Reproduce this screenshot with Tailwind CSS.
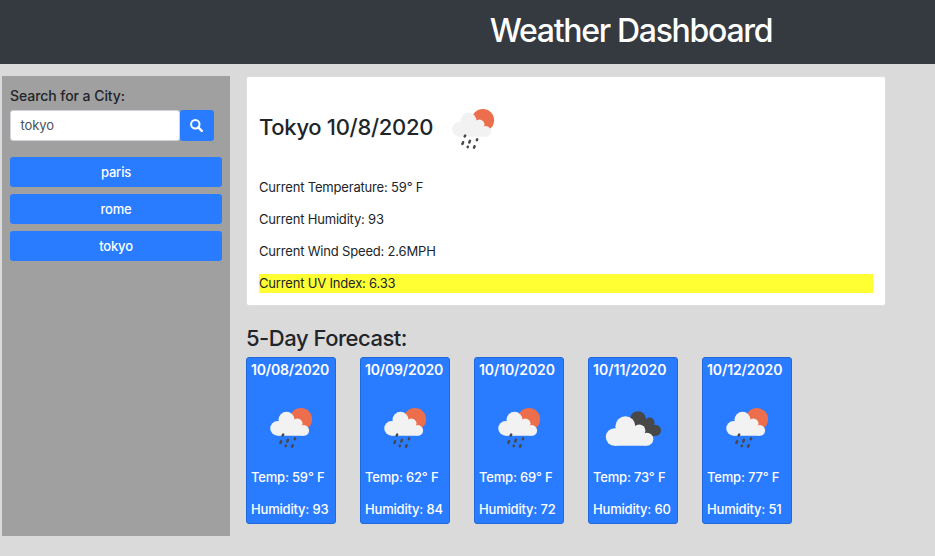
<!DOCTYPE html>
<html lang="en">
<head>
<meta charset="utf-8">
<title>Weather Dashboard</title>
<script src="https://cdn.jsdelivr.net/npm/@tailwindcss/browser@4"></script>
</head>
<body class="h-[556px] overflow-hidden bg-[#dadada] font-['Inter','Liberation_Sans',sans-serif] text-[13px] leading-[19px] tracking-[-0.18px] text-[#212529]">
<svg class="hidden">
  <symbol id="rain" viewBox="0 0 43 42">
    <circle cx="30.9" cy="11.2" r="11.2" fill="#ec6e4c"/>
    <g fill="#f2f2f2"><circle cx="7.6" cy="20.4" r="7.3"/><circle cx="16.5" cy="11.8" r="8"/><circle cx="27.3" cy="15.6" r="5.2"/><circle cx="33.8" cy="22.4" r="5.3"/><path d="M7.6 27.7V14L12 12L27 14L31 18L33.8 27.7Z"/></g>
    <g stroke="#484848" stroke-width="2.5" stroke-linecap="round"><path d="M13.2 26.5l-.5 1M11.1 33.2l-.7 1.7M18 31.8l-.7 1.7M25.2 30.3l-.4.8M15.8 37.8l-.1.3M22.6 37.2l-.6 1.5"/></g>
  </symbol>
  <symbol id="clouds" viewBox="0 0 57 37">
    <g fill="#484848"><circle cx="33" cy="9.2" r="8"/><circle cx="44.6" cy="12.5" r="4.9"/><circle cx="50.3" cy="20.4" r="5.7"/><path d="M33 6L40 10L45 11L49.5 15L50.5 26.1H42L30 18Z"/></g>
    <g fill="#f2f2f2"><circle cx="9.6" cy="27" r="8.8"/><circle cx="20.4" cy="16.2" r="10"/><circle cx="34.2" cy="20.6" r="6.2"/><circle cx="41.8" cy="29.2" r="6.5"/><path d="M9.6 35.7V19L15 16L34 19L38 24L41.8 35.7Z"/></g>
  </symbol>
</svg>
<header class="flex h-16 justify-center bg-[#343a40] pt-[7px] pl-[327px]">
  <h1 class="text-[32px] leading-[48px] font-medium tracking-[-1.3px] whitespace-nowrap text-white">Weather Dashboard</h1>
</header>
<main class="flex pt-3 pl-[2px]">
  <aside class="h-[460px] w-[228px] bg-[#a0a0a0] px-2 pt-[10px]">
    <h2 class="text-[14px] leading-5 font-medium tracking-[-0.06px]">Search for a City:</h2>
    <div class="mt-1 flex">
      <div class="h-[31px] w-[170px] rounded-[3px] border border-[#ced4da] bg-white pl-[9.5px] leading-[29px] tracking-[-0.1px] text-[#495057]">tokyo</div>
      <button class="flex h-[31px] w-[34px] items-center justify-center rounded-[3px] bg-[#297bff]" aria-label="Search">
        <svg class="mr-px size-[13px]" viewBox="0 0 13 13" fill="none" stroke="white" stroke-width="2"><circle cx="5.3" cy="5.2" r="4.2"/><path d="M8.3 8.3l3.5 3.5" stroke-width="2.4" stroke-linecap="round"/></svg>
      </button>
    </div>
    <div class="mt-4 flex flex-col gap-[7px] text-center leading-[30px] font-medium text-white">
      <button class="h-[30px] rounded-[3px] bg-[#297bff]">paris</button>
      <button class="h-[30px] rounded-[3px] bg-[#297bff]">rome</button>
      <button class="h-[30px] rounded-[3px] bg-[#297bff]">tokyo</button>
    </div>
  </aside>
  <div class="ml-4">
    <section class="h-[230px] w-[640px] rounded-[3px] border border-[#dfdfdf] bg-white px-3">
      <div class="flex h-[101px] items-center">
        <h2 class="mb-[2px] w-[193px] text-[22px] leading-7 font-medium tracking-[-0.3px] whitespace-nowrap">Tokyo 10/8/2020</h2>
        <svg class="mt-1 h-[42px] w-[43px]"><use href="#rain"/></svg>
      </div>
      <div class="flex flex-col gap-[13px]">
        <p>Current Temperature: 59° F</p>
        <p>Current Humidity: 93</p>
        <p>Current Wind Speed: 2.6MPH</p>
        <p class="bg-[#ffff33]">Current UV Index: 6.33</p>
      </div>
    </section>
    <h2 class="mt-[18px] text-[22px] leading-7 font-medium tracking-[-0.48px]">5-Day Forecast:</h2>
    <div class="mt-[5px] flex gap-6 font-medium whitespace-nowrap text-white">
      <article class="h-[167px] w-[90px] rounded-[3px] border border-[#2168d8] bg-[#297bff] px-1 pt-[2px]">
        <h3 class="text-[14px] leading-5 font-semibold">10/08/2020</h3>
        <svg class="mt-7 ml-[19px] h-[42px] w-[43px]"><use href="#rain"/></svg>
        <p class="mt-[18px]">Temp: 59° F</p><p class="mt-[13px]">Humidity: 93</p>
      </article>
      <article class="h-[167px] w-[90px] rounded-[3px] border border-[#2168d8] bg-[#297bff] px-1 pt-[2px]">
        <h3 class="text-[14px] leading-5 font-semibold">10/09/2020</h3>
        <svg class="mt-7 ml-[19px] h-[42px] w-[43px]"><use href="#rain"/></svg>
        <p class="mt-[18px]">Temp: 62° F</p><p class="mt-[13px]">Humidity: 84</p>
      </article>
      <article class="h-[167px] w-[90px] rounded-[3px] border border-[#2168d8] bg-[#297bff] px-1 pt-[2px]">
        <h3 class="text-[14px] leading-5 font-semibold tracking-[-0.1px]">10/10/2020</h3>
        <svg class="mt-7 ml-[19px] h-[42px] w-[43px]"><use href="#rain"/></svg>
        <p class="mt-[18px]">Temp: 69° F</p><p class="mt-[13px]">Humidity: 72</p>
      </article>
      <article class="h-[167px] w-[90px] rounded-[3px] border border-[#2168d8] bg-[#297bff] px-1 pt-[2px]">
        <h3 class="text-[14px] leading-5 font-semibold tracking-normal">10/11/2020</h3>
        <svg class="mt-[30px] ml-3 h-[37px] w-[57px]"><use href="#clouds"/></svg>
        <p class="mt-[21px]">Temp: 73° F</p><p class="mt-[13px]">Humidity: 60</p>
      </article>
      <article class="h-[167px] w-[90px] rounded-[3px] border border-[#2168d8] bg-[#297bff] px-1 pt-[2px]">
        <h3 class="text-[14px] leading-5 font-semibold tracking-[-0.1px]">10/12/2020</h3>
        <svg class="mt-7 ml-[19px] h-[42px] w-[43px]"><use href="#rain"/></svg>
        <p class="mt-[18px]">Temp: 77° F</p><p class="mt-[13px]">Humidity: 51</p>
      </article>
    </div>
  </div>
</main>
</body>
</html>
